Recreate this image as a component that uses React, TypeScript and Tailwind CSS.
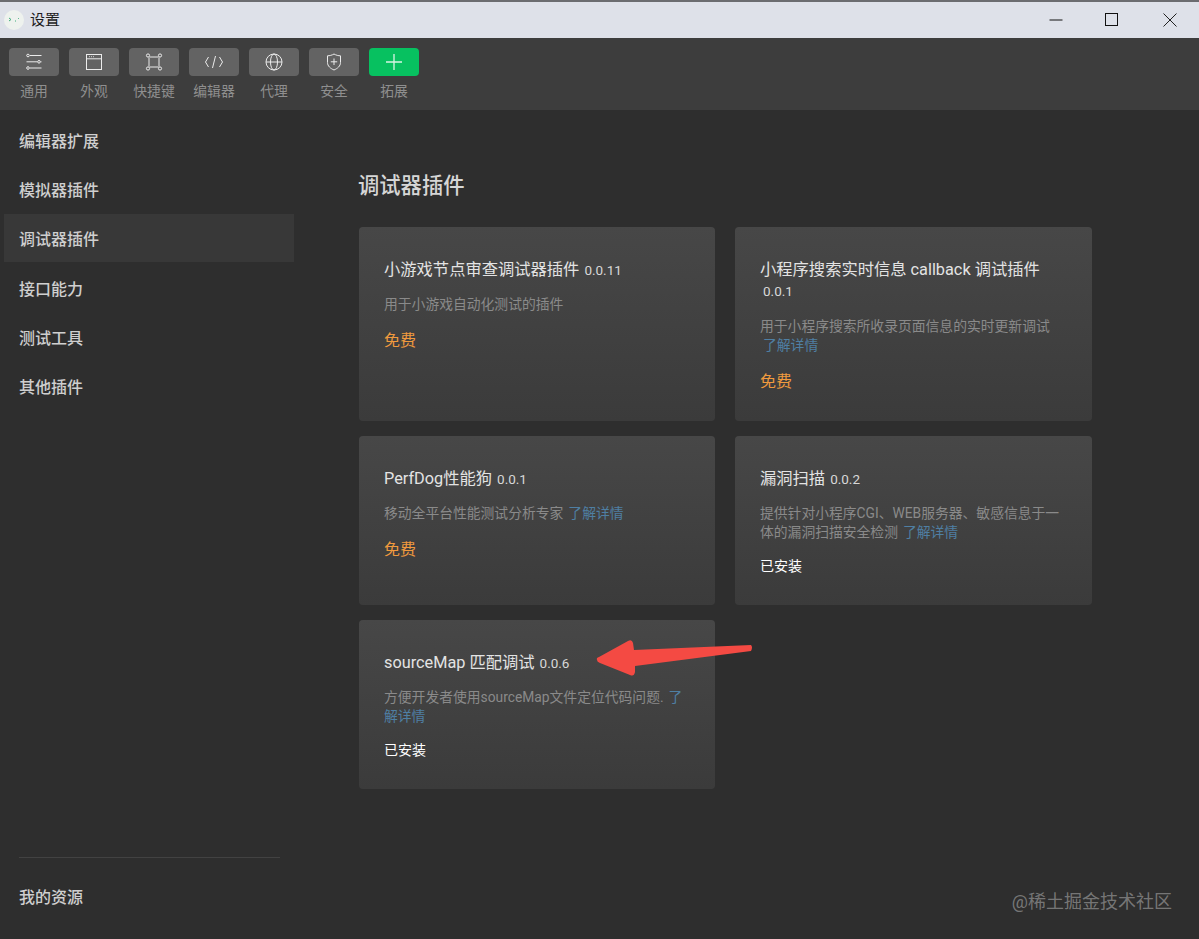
import React from "react";

const font = { fontFamily: 'Roboto, "Noto Sans CJK SC", sans-serif' };

const I = ({ children }: { children: React.ReactNode }) => (
  <svg width="20" height="20" viewBox="0 0 20 20" fill="none" stroke="#ececec" strokeWidth="1">
    {children}
  </svg>
);

const icons: React.ReactNode[] = [
  <I key="a">
    <path d="M6 3.500h11.500M2.500 9.800h11M16.500 9.800h1M6 16h11.500" />
    <circle cx="4" cy="3.500" r="1.300" />
    <circle cx="15" cy="9.800" r="1.300" />
    <circle cx="4" cy="16" r="1.300" />
  </I>,
  <I key="b">
    <rect x="2.500" y="2.500" width="15" height="15" />
    <path d="M2.500 6.800h15M5 4.700h.8M7 4.700h.8M9 4.700h.8" />
  </I>,
  <I key="c">
    <path d="M5.500 5h9M5.500 15h9M5 5.500v9M15 5.500v9" />
    <circle cx="4" cy="3.500" r="1.600" />
    <circle cx="16" cy="3.500" r="1.600" />
    <circle cx="4" cy="16.500" r="1.600" />
    <circle cx="16" cy="16.500" r="1.600" />
  </I>,
  <I key="d">
    <path d="M4.500 5L1.500 10l3 5M11.500 4l-3 12M15.500 5l3 5-3 5" />
  </I>,
  <I key="e">
    <circle cx="10" cy="10" r="8" />
    <ellipse cx="10" cy="10" rx="3.500" ry="8" />
    <path d="M2 10h16" />
  </I>,
  <I key="f">
    <path d="M10 2c2 1.200 4.500 1.800 6.500 1.800v6.700c0 3.600-3 6-6.500 7.500-3.500-1.500-6.500-3.900-6.500-7.500V3.800c2 0 4.500-.6 6.500-1.800z" />
    <path d="M10 6.500v6.500M6.800 9.800h6.400" />
  </I>,
];

const tabs = ["通用", "外观", "快捷键", "编辑器", "代理", "安全", "拓展"];
const menu = ["编辑器扩展", "模拟器插件", "调试器插件", "接口能力", "测试工具", "其他插件"];

type Card = {
  title: string;
  version: string;
  versionBreak?: boolean;
  desc: string;
  link?: boolean;
  linkBlock?: boolean;
  status: string;
  h: string;
};

function PluginCard({ c }: { c: Card }) {
  const free = c.status === "免费";
  return (
    <div className={`${c.h} rounded-[4px] bg-gradient-to-b from-[#474747] to-[#3b3b3b] pl-[25px] pr-[22px] pt-[32px]`}>
      <div className="text-[16.300px] leading-[21px] text-[#e3e3e3]">
        {c.title}
        {c.versionBreak ? (
          <div className="pl-[3px] text-[13.500px] leading-[23px] text-[#d8d8d8]">{c.version}</div>
        ) : (
          <span className="ml-[5px] text-[13.500px] text-[#d8d8d8]">{c.version}</span>
        )}
      </div>
      <div className="mt-[14px] text-[13.800px] leading-[19px] text-[#8a8a8a]">
        {c.desc}
        {c.link && <span className="ml-[5px] text-[#4f7fa3]">了解详情</span>}
        {c.linkBlock && <div className="pl-[3px] text-[#4f7fa3]">了解详情</div>}
      </div>
      <div className={free ? "mt-[17px] text-[16px] leading-[20px] text-[#f09a3e]" : "mt-[14px] text-[14px] leading-[20px] text-white"}>
        {c.status}
      </div>
    </div>
  );
}

const cards: Card[] = [
  { title: "小游戏节点审查调试器插件", version: "0.0.11", desc: "用于小游戏自动化测试的插件", status: "免费", h: "h-[194px]" },
  { title: "小程序搜索实时信息 callback 调试插件", version: "0.0.1", versionBreak: true, desc: "用于小程序搜索所收录页面信息的实时更新调试", linkBlock: true, status: "免费", h: "h-[194px]" },
  { title: "PerfDog性能狗", version: "0.0.1", desc: "移动全平台性能测试分析专家", link: true, status: "免费", h: "h-[169px]" },
  { title: "漏洞扫描", version: "0.0.2", desc: "提供针对小程序CGI、WEB服务器、敏感信息于一体的漏洞扫描安全检测", link: true, status: "已安装", h: "h-[169px]" },
  { title: "sourceMap 匹配调试", version: "0.0.6", desc: "方便开发者使用sourceMap文件定位代码问题.", link: true, status: "已安装", h: "h-[169px]" },
];

export default function App() {
  return (
    <div className="relative flex h-[939px] w-[1199px] flex-col overflow-hidden bg-[#2e2e2e]" style={font}>
      <div className="flex h-[38px] items-center border-t-2 border-[#6b6c70] bg-[#dee1e9]">
        <div className="ml-[4px] flex h-[20px] w-[20px] items-center justify-center rounded-full bg-[#eef2ee]">
          <svg width="12" height="8" viewBox="0 0 12 8" fill="none" stroke="#3fae7c" strokeWidth="1">
            <path d="M1 2l2 1.500-2 1.500M7 5h1M10 2.500h.8" />
          </svg>
        </div>
        <span className="ml-[6px] text-[15px] text-[#1c1c1c]">设置</span>
        <div className="ml-auto flex items-center">
          <svg width="14" height="14" viewBox="0 0 14 14" className="mr-[42px]"><path d="M0.500 7h13" stroke="#111" strokeWidth="1" /></svg>
          <svg width="14" height="14" viewBox="0 0 14 14" className="mr-[44px]"><rect x="0.500" y="0.500" width="12" height="12" fill="none" stroke="#111" strokeWidth="1" /></svg>
          <svg width="14" height="14" viewBox="0 0 14 14" className="mr-[22px]"><path d="M0.500 0.500l13 13M13.500 0.500l-13 13" stroke="#222" strokeWidth="1" /></svg>
        </div>
      </div>

      <div className="flex h-[72px] gap-[10px] bg-[#3d3d3d] pl-[9px] pt-[10px]">
        {tabs.map((t, i) => (
          <div key={t} className="flex w-[50px] flex-col items-center">
            <div className={`flex h-[28px] w-[50px] items-center justify-center rounded-[4px] ${i === 6 ? "bg-[#07c160]" : "bg-[#636363]"}`}>
              {i === 6 ? (
                <svg width="16" height="16" viewBox="0 0 16 16"><path d="M8 0v16M0 8h16" stroke="#d8f5e4" strokeWidth="1.300" /></svg>
              ) : (
                icons[i]
              )}
            </div>
            <span className="mt-[5px] whitespace-nowrap text-[13.800px] leading-[20px] text-[#8f8f8f]">{t}</span>
          </div>
        ))}
      </div>

      <div className="flex min-h-0 flex-1">
        <aside className="flex w-[359px] flex-col pb-[29px] pl-[4px] pt-[5px]">
          <div className="flex flex-col gap-[1.400px]">
            {menu.map((m, i) => (
              <div
                key={m}
                className={`flex h-[48px] w-[290px] items-center pl-[15px] pt-[5px] text-[16px] font-medium text-[#cfcfcf] ${i === 2 ? "bg-[#383838]" : ""}`}
              >
                {m}
              </div>
            ))}
          </div>
          <div className="mt-auto ml-[15px] w-[261px] border-t border-[#424242] pt-[28px] text-[16px] font-medium leading-[24px] text-[#cfcfcf]">
            我的资源
          </div>
        </aside>
        <main className="w-[733px] pt-[62px]">
          <h1 className="-ml-[1px] text-[21.300px] font-medium leading-[28px] text-[#d6d6d6]">调试器插件</h1>
          <div className="mt-[27px] grid grid-cols-[356px_357px] gap-x-[20px] gap-y-[15px]">
            {cards.map((c) => (
              <PluginCard key={c.title} c={c} />
            ))}
          </div>
        </main>
      </div>

      <svg className="absolute left-[595px] top-[638px]" width="160" height="42" viewBox="0 0 160 42">
        <path d="M2 22 Q1 20 4 19 L33 3 Q37 1 38 5 L39 12 L156 7 Q158 9 156 13 L40 28 L40 34 Q39 39 35 37 L5 25 Q2 24 2 22z" fill="#f44a43" />
      </svg>
      <div className="absolute right-[27px] top-[890px] text-[18px] leading-[24px] text-[#8a8a8a]/80">@稀土掘金技术社区</div>
    </div>
  );
}
